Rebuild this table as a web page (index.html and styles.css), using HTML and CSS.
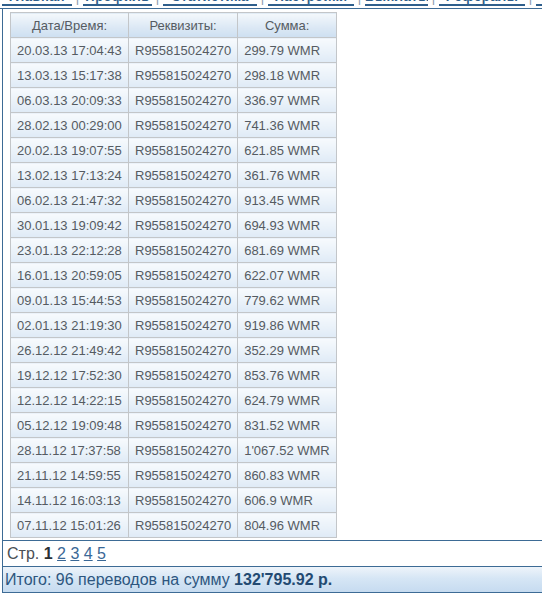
FILE: index.html
```html
<!DOCTYPE html>
<html lang="ru">
<head>
<meta charset="utf-8">
<title>Переводы</title>
<link rel="stylesheet" href="styles.css">
</head>
<body>
<div class="nav">
  <div class="nav-inner">
    <a href="#" class="l1">Главная</a><span class="sep">|</span><a href="#" class="l2">Профиль</a><span class="sep">|</span><a href="#" class="l3">Статистика</a><span class="sep">|</span><a href="#" class="l4">Настройки</a><span class="sep">|</span><a href="#" class="l5">Выплаты</a><span class="sep">|</span><a href="#" class="l6">Рефералы</a><span class="sep">|</span><a href="#" class="l7">Выход</a>
  </div>
</div>
<div class="panel">
  <div class="table-area">
    <table class="tx">
      <thead>
        <tr><th class="c1">Дата/Время:</th><th class="c2">Реквизиты:</th><th class="c3">Сумма:</th></tr>
      </thead>
      <tbody>
        <tr><td>20.03.13 17:04:43</td><td>R955815024270</td><td>299.79 WMR</td></tr>
        <tr><td>13.03.13 15:17:38</td><td>R955815024270</td><td>298.18 WMR</td></tr>
        <tr><td>06.03.13 20:09:33</td><td>R955815024270</td><td>336.97 WMR</td></tr>
        <tr><td>28.02.13 00:29:00</td><td>R955815024270</td><td>741.36 WMR</td></tr>
        <tr><td>20.02.13 19:07:55</td><td>R955815024270</td><td>621.85 WMR</td></tr>
        <tr><td>13.02.13 17:13:24</td><td>R955815024270</td><td>361.76 WMR</td></tr>
        <tr><td>06.02.13 21:47:32</td><td>R955815024270</td><td>913.45 WMR</td></tr>
        <tr><td>30.01.13 19:09:42</td><td>R955815024270</td><td>694.93 WMR</td></tr>
        <tr><td>23.01.13 22:12:28</td><td>R955815024270</td><td>681.69 WMR</td></tr>
        <tr><td>16.01.13 20:59:05</td><td>R955815024270</td><td>622.07 WMR</td></tr>
        <tr><td>09.01.13 15:44:53</td><td>R955815024270</td><td>779.62 WMR</td></tr>
        <tr><td>02.01.13 21:19:30</td><td>R955815024270</td><td>919.86 WMR</td></tr>
        <tr><td>26.12.12 21:49:42</td><td>R955815024270</td><td>352.29 WMR</td></tr>
        <tr><td>19.12.12 17:52:30</td><td>R955815024270</td><td>853.76 WMR</td></tr>
        <tr><td>12.12.12 14:22:15</td><td>R955815024270</td><td>624.79 WMR</td></tr>
        <tr><td>05.12.12 19:09:48</td><td>R955815024270</td><td>831.52 WMR</td></tr>
        <tr><td>28.11.12 17:37:58</td><td>R955815024270</td><td>1'067.52 WMR</td></tr>
        <tr><td>21.11.12 14:59:55</td><td>R955815024270</td><td>860.83 WMR</td></tr>
        <tr><td>14.11.12 16:03:13</td><td>R955815024270</td><td>606.9 WMR</td></tr>
        <tr><td>07.11.12 15:01:26</td><td>R955815024270</td><td>804.96 WMR</td></tr>
      </tbody>
    </table>
  </div>
  <div class="pager">Стр. <b>1</b> <a href="#">2</a> <a href="#">3</a> <a href="#">4</a> <a href="#">5</a></div>
  <div class="total">Итого: 96 переводов на сумму <b>132'795.92 р.</b></div>
</div>
</body>
</html>
```
FILE: styles.css
```css
html, body {
  margin: 0;
  padding: 0;
  background: #ffffff;
  font-family: "Liberation Sans", Arial, sans-serif;
}

.nav {
  height: 8px;
  overflow: hidden;
  background: #ffffff;
  border-bottom: 1px solid #3d6b95;
}

.nav-inner {
  margin-top: -10px;
  padding-left: 2px;
  white-space: nowrap;
  font-size: 13px;
  line-height: 14px;
}

.nav-inner a {
  display: inline-block;
  height: 14px;
  overflow: hidden;
  vertical-align: top;
  color: #2f5f8c;
  font-weight: bold;
  text-decoration: none;
  text-align: center;
  letter-spacing: 0.5px;
  border-bottom: 2px solid #2f5f8c;
}

.nav-inner .sep {
  display: inline-block;
  vertical-align: top;
  color: #8a9aab;
  width: 11px;
  height: 18px;
  line-height: 16px;
  text-align: center;
}

.l1 { width: 70px; }
.l2 { width: 69px; }
.l3 { width: 94px; }
.l4 { width: 86px; }
.l5 { width: 63px; }
.l6 { width: 86px; }
.l7 { width: 60px; }

.panel {
  margin-left: 2px;
  border-left: 1px solid #3d6b95;
}

.table-area {
  padding: 3px 0 2px 7px;
}

.tx {
  border-collapse: collapse;
  font-size: 13px;
  color: #555b62;
}

.tx th,
.tx td {
  border: 1px solid #c3c6c9;
  height: 24px;
  padding: 0 6px;
  white-space: nowrap;
  background: linear-gradient(to bottom, #f7fafd 0%, #e9f1f9 60%, #dfeaf6 100%);
}

.tx th {
  font-weight: normal;
  text-align: center;
  background: linear-gradient(to bottom, #f4f8fc 0%, #dde9f5 55%, #cddff1 100%);
}

.tx td {
  text-align: left;
}

.tx .c1 { width: 105px; }
.tx .c2 { width: 95px; }
.tx .c3 { width: 86px; }

.pager {
  border-top: 1px solid #3d6b95;
  height: 25px;
  line-height: 25px;
  padding-left: 4px;
  font-size: 16px;
  color: #4a4f55;
}

.pager b {
  color: #2b2f33;
}

.pager a {
  color: #3a6896;
  text-decoration: underline;
}

.total {
  border-top: 1px solid #3d6b95;
  border-bottom: 1px solid #3d6b95;
  height: 25px;
  line-height: 25px;
  padding-left: 2px;
  font-size: 16px;
  color: #2d567f;
  background: linear-gradient(to bottom, #eef4fa 0%, #d6e6f5 45%, #c6dbf0 100%);
}

.total b {
  color: #234a72;
}
```
